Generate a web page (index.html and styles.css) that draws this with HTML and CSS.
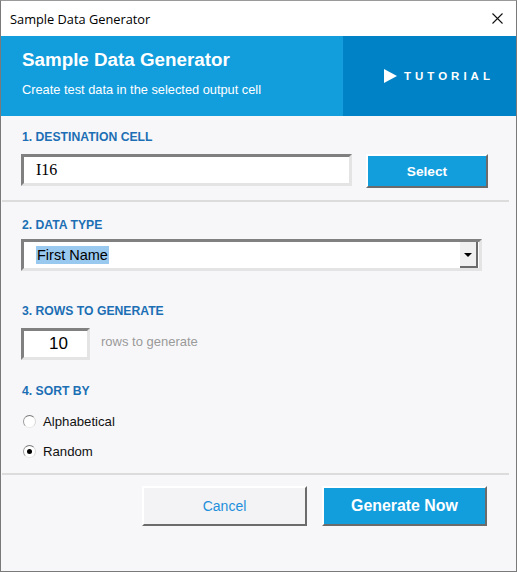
FILE: index.html
```html
<!DOCTYPE html>
<html lang="en">
<head>
    <meta charset="UTF-8">
    <title>Sample Data Generator</title>
    <link rel="stylesheet" href="styles.css">
</head>
<body>
    <div class="window">
        <div class="titlebar">
            <span class="title-text">Sample Data Generator</span>
            <svg class="close" width="11" height="11" viewBox="0 0 11 11">
                <path d="M0.5 0.5 L10.5 10.5 M10.5 0.5 L0.5 10.5" stroke="#111" stroke-width="1.1" fill="none"/>
            </svg>
        </div>
        <header class="banner">
            <div class="banner-main">
                <h1>Sample Data Generator</h1>
                <p>Create test data in the selected output cell</p>
            </div>
            <div class="banner-side">
                <svg class="play" width="13" height="14" viewBox="0 0 13 14">
                    <path d="M0 0 L13 7 L0 14 Z" fill="#fff"/>
                </svg>
                <span class="tutorial">TUTORIAL</span>
            </div>
        </header>
        <main class="content">
            <section class="group first">
                <div class="label">1. DESTINATION CELL</div>
                <div class="row">
                    <div class="field cell-field">I16</div>
                    <button class="btn btn-blue btn-select">Select</button>
                </div>
            </section>
            <hr class="divider">
            <section class="group second">
                <div class="label">2. DATA TYPE</div>
                <div class="field combo">
                    <span class="combo-value">First Name</span>
                    <span class="combo-arrow"></span>
                </div>
            </section>
            <section class="group third">
                <div class="label">3. ROWS TO GENERATE</div>
                <div class="row">
                    <div class="field rows-field">10</div>
                    <span class="hint">rows to generate</span>
                </div>
            </section>
            <section class="group fourth">
                <div class="label">4. SORT BY</div>
                <div class="radio"><span class="dot"></span>Alphabetical</div>
                <div class="radio"><span class="dot checked"></span>Random</div>
            </section>
            <hr class="divider bottom">
            <div class="actions">
                <button class="btn btn-light">Cancel</button>
                <button class="btn btn-blue btn-generate">Generate Now</button>
            </div>
        </main>
    </div>
</body>
</html>
```

FILE: styles.css
```css
body {
    margin: 0;
    font-family: "Liberation Sans", Arial, sans-serif;
    background: #f7f7f9;
}
.window {
    width: 517px;
    height: 572px;
    box-sizing: border-box;
    border: 1px solid #7a7a7a;
    border-top-color: #9a9a9a;
    background: #f7f7f9;
    display: flex;
    flex-direction: column;
}
.titlebar {
    height: 35px;
    background: #fff;
    display: flex;
    align-items: center;
    justify-content: space-between;
    padding: 0 13px 0 9px;
}
.title-text {
    font-family: "Open Sans", sans-serif;
    font-size: 12.8px;
    color: #000;
}
.banner {
    height: 80px;
    display: flex;
    color: #fff;
}
.banner-main {
    flex: 1;
    background: #129ddd;
    padding: 12px 0 0 21px;
}
.banner-main h1 {
    margin: 0;
    font-size: 18.8px;
    font-weight: bold;
    line-height: 24px;
}
.banner-main p {
    margin: 10px 0 0;
    font-size: 12.8px;
}
.banner-side {
    width: 173px;
    background: #0083c6;
    display: flex;
    align-items: center;
    padding-left: 41px;
    box-sizing: border-box;
}
.play {
    margin-right: 7px;
}
.tutorial {
    font-size: 11.5px;
    font-weight: bold;
    letter-spacing: 4px;
}
.content {
    flex: 1;
    padding: 0 7px 0 20px;
}
.label {
    font-size: 12.2px;
    font-weight: bold;
    color: #1c6fb4;
    line-height: 15px;
    margin: 0 0 9px 1px;
}
.group.first {
    padding-top: 14px;
}
.group.second {
    padding-top: 16px;
}
.group.second .label {
    margin-bottom: 6px;
}
.group.third {
    padding-top: 33px;
}
.group.fourth {
    padding-top: 24px;
}
.row {
    display: flex;
    align-items: flex-start;
}
.field {
    box-sizing: border-box;
    height: 32px;
    background: #fff;
    border: 3px solid;
    border-color: #808080 #e4e4e4 #e4e4e4 #808080;
}
.cell-field {
    width: 331px;
    font-family: "Liberation Serif", serif;
    font-size: 16px;
    line-height: 26px;
    padding-left: 12px;
}
.btn {
    box-sizing: border-box;
    font-family: "Liberation Sans", Arial, sans-serif;
    cursor: pointer;
    border: 2px solid;
    border-color: #fff #6b6b6b #6b6b6b #fff;
}
.btn-blue {
    background: #129ddd;
    color: #fff;
    font-weight: bold;
}
.btn-select {
    margin-left: 14px;
    width: 122px;
    height: 34px;
    font-size: 13.7px;
}
.divider {
    margin: 12px 0 0 -19px;
    border: 0;
    height: 2px;
    background: #dcdcdc;
}
.combo {
    width: 461px;
    display: flex;
    align-items: center;
    justify-content: space-between;
    padding: 0 1px 0 12px;
}
.combo-value {
    background: #99c9ef;
    font-size: 14.5px;
    line-height: 18px;
    padding: 0 1px;
}
.combo-arrow {
    width: 18px;
    height: 26px;
    box-sizing: border-box;
    background: #f0f0f0;
    border-right: 2px solid #6b6b6b;
    border-bottom: 2px solid #6b6b6b;
    position: relative;
}
.combo-arrow::after {
    content: "";
    position: absolute;
    left: 4px;
    top: 11px;
    border-left: 4px solid transparent;
    border-right: 4px solid transparent;
    border-top: 4px solid #000;
}
.rows-field {
    width: 69px;
    font-size: 17px;
    line-height: 26px;
    text-align: center;
    padding-left: 6px;
}
.hint {
    margin: 6px 0 0 11px;
    font-size: 13px;
    color: #9a9a9a;
}
.radio {
    display: flex;
    align-items: center;
    font-size: 13.2px;
    height: 20px;
    margin-top: 12px;
    color: #111;
}
.radio + .radio {
    margin-top: 10px;
}
.dot {
    width: 11px;
    height: 11px;
    border-radius: 50%;
    border: 1px solid #8c8c8c;
    border-color: #7a7a7a #d8d8d8 #e8e8e8 #9a9a9a;
    background: #fff;
    margin: 0 7px 0 2px;
    position: relative;
}
.dot.checked::after {
    content: "";
    position: absolute;
    left: 3px;
    top: 3px;
    width: 5px;
    height: 5px;
    border-radius: 50%;
    background: #000;
}
.divider.bottom {
    margin-top: 12px;
}
.actions {
    display: flex;
    justify-content: flex-end;
    gap: 15px;
    margin-top: 11px;
    padding-right: 22px;
}
.actions .btn {
    width: 165px;
    height: 40px;
}
.btn-light {
    background: #f3f3f5;
    color: #1e8fdb;
    font-size: 14px;
    border-color: #fff #6b6b6b #6b6b6b #fff;
}
.btn-generate {
    font-size: 15.9px;
}
```
